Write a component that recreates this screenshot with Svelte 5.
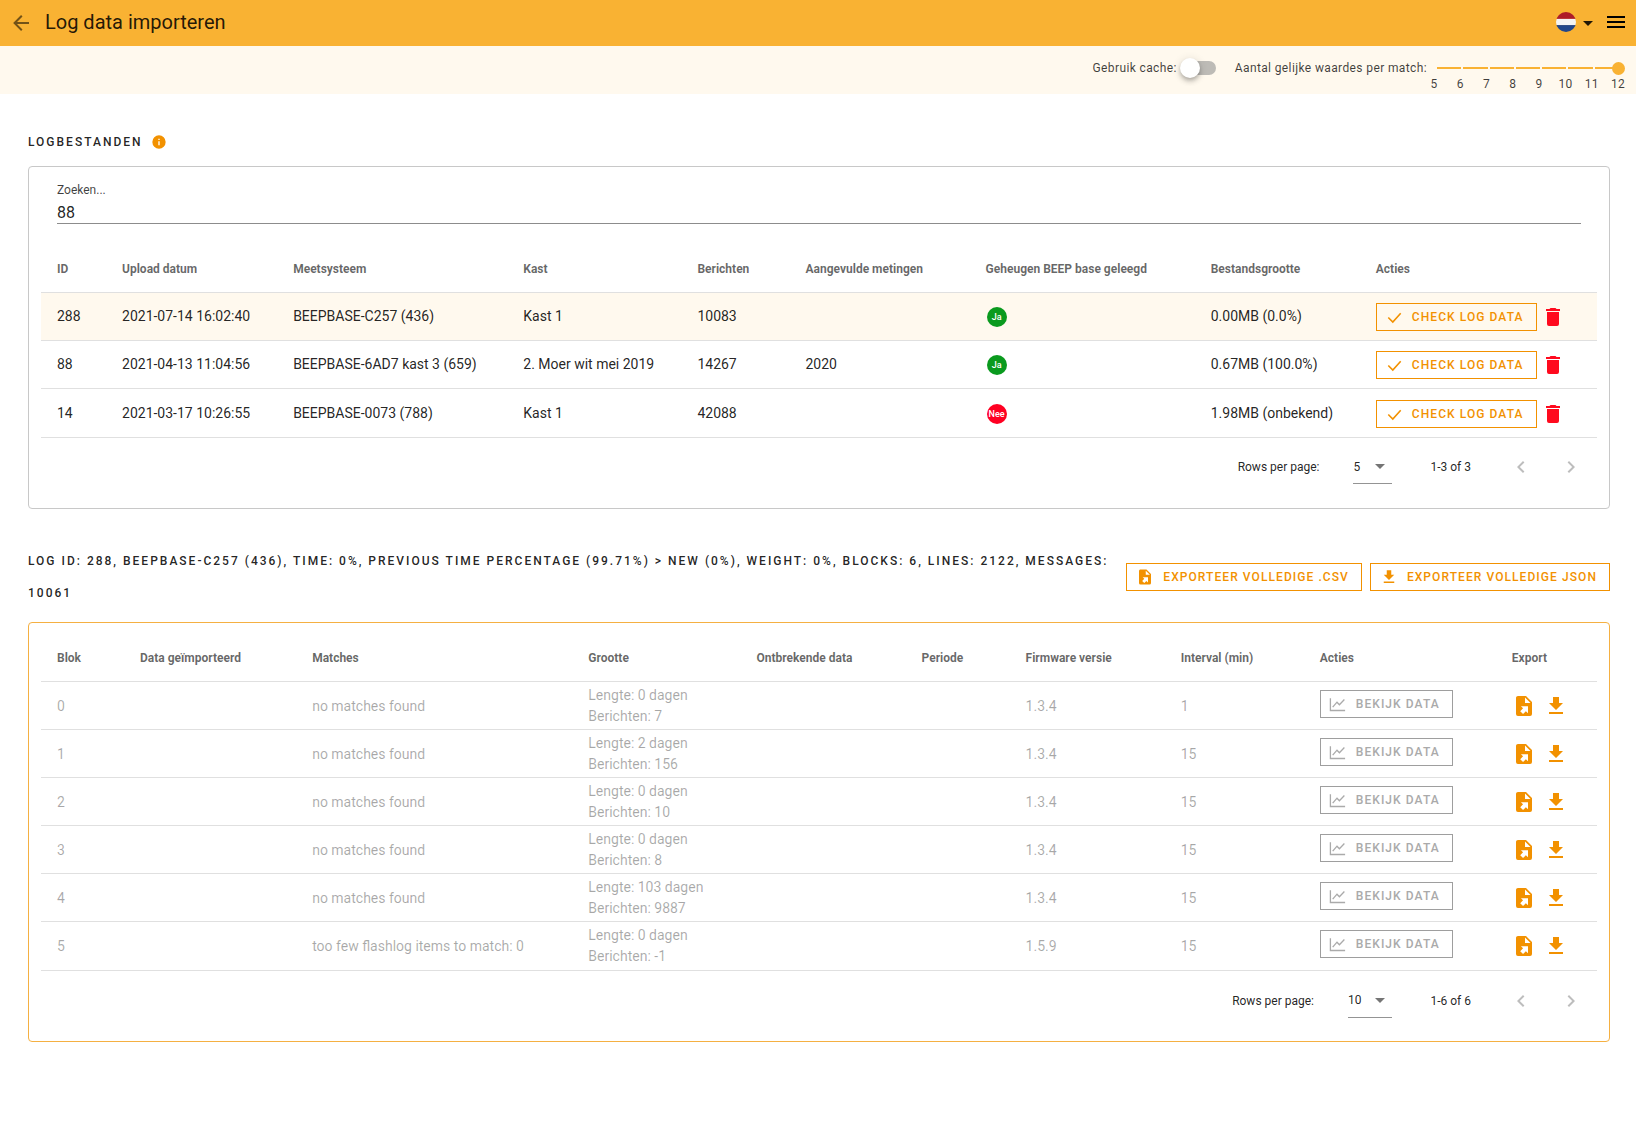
<script>
  const files = [
    { id: 288, date: '2021-07-14 16:02:40', sys: 'BEEPBASE-C257 (436)', kast: 'Kast 1', msg: 10083, fill: '', ok: true, size: '0.00MB (0.0%)' },
    { id: 88, date: '2021-04-13 11:04:56', sys: 'BEEPBASE-6AD7 kast 3 (659)', kast: '2. Moer wit mei 2019', msg: 14267, fill: '2020', ok: true, size: '0.67MB (100.0%)' },
    { id: 14, date: '2021-03-17 10:26:55', sys: 'BEEPBASE-0073 (788)', kast: 'Kast 1', msg: 42088, fill: '', ok: false, size: '1.98MB (onbekend)' }
  ];
  const fileHead = ['ID', 'Upload datum', 'Meetsysteem', 'Kast', 'Berichten', 'Aangevulde metingen', 'Geheugen BEEP base geleegd', 'Bestandsgrootte', 'Acties'];
  const fileCols = [65, 171, 230, 174, 108, 180, 225, 165, 237];
  const blocks = [
    { b: 0, m: 'no matches found', d: 0, n: 7, v: '1.3.4', i: 1 },
    { b: 1, m: 'no matches found', d: 2, n: 156, v: '1.3.4', i: 15 },
    { b: 2, m: 'no matches found', d: 0, n: 10, v: '1.3.4', i: 15 },
    { b: 3, m: 'no matches found', d: 0, n: 8, v: '1.3.4', i: 15 },
    { b: 4, m: 'no matches found', d: 103, n: 9887, v: '1.3.4', i: 15 },
    { b: 5, m: 'too few flashlog items to match: 0', d: 0, n: -1, v: '1.5.9', i: 15 }
  ];
  const blockHead = ['Blok', 'Data geïmporteerd', 'Matches', 'Grootte', 'Ontbrekende data', 'Periode', 'Firmware versie', 'Interval (min)', 'Acties', 'Export'];
  const blockCols = [83, 172, 276, 168, 165, 104, 155, 139, 192, 101];
  const marks = [5, 6, 7, 8, 9, 10, 11, 12];
  const fileExport = 'M6,2C4.89,2 4,2.9 4,4V20A2,2 0 0,0 6,22H18A2,2 0 0,0 20,20V8L14,2M13,3.5L18.5,9H13M8.93,12.22H16V19.29L13.88,17.17L11.05,20L8.22,17.17L11.05,14.35';
  const download = 'M5,20H19V18H5M19,9H15V3H9V9H5L12,16L19,9Z';
  const trash = 'M19,4H15.5L14.5,3H9.5L8.5,4H5V6H19M6,19A2,2 0 0,0 8,21H16A2,2 0 0,0 18,19V7H6V19Z';
  const chevL = 'M15.41,16.58L10.83,12L15.41,7.41L14,6L8,12L14,18L15.41,16.58Z';
  const chevR = 'M8.59,16.58L13.17,12L8.59,7.41L10,6L16,12L10,18L8.59,16.58Z';
</script>

{#snippet icon(d, cls)}
  <svg class={cls} viewBox="0 0 24 24" aria-hidden="true"><path {d} /></svg>
{/snippet}

{#snippet footer(rows, range)}
  <div class="foot">
    <span>Rows per page:</span>
    <div class="sel"><span>{rows}</span><i class="caret grey"></i></div>
    <span class="range">{range}</span>
    <div class="pg">{@render icon(chevL, 'chev')}</div>
    <div class="pg next">{@render icon(chevR, 'chev')}</div>
  </div>
{/snippet}

<header class="bar">
  <svg class="back" viewBox="0 0 24 24"><path d="M20,11V13H8L13.5,18.5L12.08,19.92L4.16,12L12.08,4.08L13.5,5.5L8,11H20Z" /></svg>
  <h1>Log data importeren</h1>
  <div class="spacer"></div>
  <svg class="flag" viewBox="0 0 22 22">
    <defs><clipPath id="fc"><circle cx="11" cy="11" r="11" /></clipPath></defs>
    <g clip-path="url(#fc)">
      <rect width="22" height="7.6" fill="#ae1c28" />
      <rect y="7.6" width="22" height="6.8" fill="#f4f4f4" />
      <rect y="14.4" width="22" height="7.6" fill="#21468b" />
    </g>
  </svg>
  <i class="caret dark"></i>
  <div class="burger"><span></span><span></span><span></span></div>
</header>

<div class="sub">
  <span class="lbl">Gebruik cache:</span>
  <div class="switch"><div class="thumb"></div></div>
  <span class="lbl second">Aantal gelijke waardes per match:</span>
  <div class="slider">
    <div class="track">
      {#each marks as _, i}
        {#if i > 0}<b class="seg"></b>{/if}
      {/each}
      <div class="knob"></div>
    </div>
    <div class="marks">{#each marks as m}<span>{m}</span>{/each}</div>
  </div>
</div>

<main>
  <div class="title first">
    <span class="overline">Logbestanden</span>
    {@render icon('M13,9H11V7H13M13,17H11V11H13M12,2A10,10 0 0,0 2,12A10,10 0 0,0 12,22A10,10 0 0,0 22,12A10,10 0 0,0 12,2Z', 'info')}
  </div>

  <section class="card">
    <div class="search">
      <label for="q">Zoeken...</label>
      <input id="q" value="88" />
    </div>
    <table>
      <colgroup>{#each fileCols as w}<col style="width:{w}px" />{/each}</colgroup>
      <thead><tr>{#each fileHead as h}<th>{h}</th>{/each}</tr></thead>
      <tbody>
        {#each files as f, i}
          <tr class:sel-row={i === 0}>
            <td>{f.id}</td>
            <td>{f.date}</td>
            <td>{f.sys}</td>
            <td>{f.kast}</td>
            <td>{f.msg}</td>
            <td>{f.fill}</td>
            <td><span class="chip" class:no={!f.ok}>{f.ok ? 'Ja' : 'Nee'}</span></td>
            <td>{f.size}</td>
            <td>
              <div class="acts">
                <button class="btn check">
                  <svg class="tick" viewBox="0 0 18 18"><path d="M3.3,9.5 L7.8,14 L15.7,5.3" /></svg>
                  Check log data
                </button>
                {@render icon(trash, 'trash')}
              </div>
            </td>
          </tr>
        {/each}
      </tbody>
    </table>
    {@render footer(5, '1-3 of 3')}
  </section>

  <div class="second-head">
    <div class="overline long">Log ID: 288, BEEPBASE-C257 (436), Time: 0%, previous time percentage (99.71%) &gt; new (0%), Weight: 0%, Blocks: 6, Lines: 2122, Messages: 10061</div>
    <div class="exports">
      <button class="btn exp">{@render icon(fileExport, 'ic18')}Exporteer volledige .csv</button>
      <button class="btn exp">{@render icon(download, 'ic18')}Exporteer volledige json</button>
    </div>
  </div>

  <section class="card orange">
    <table class="blocks">
      <colgroup>{#each blockCols as w}<col style="width:{w}px" />{/each}</colgroup>
      <thead><tr>{#each blockHead as h}<th>{h}</th>{/each}</tr></thead>
      <tbody>
        {#each blocks as r}
          <tr>
            <td>{r.b}</td>
            <td></td>
            <td>{r.m}</td>
            <td class="two">Lengte: {r.d} dagen<br />Berichten: {r.n}</td>
            <td></td>
            <td></td>
            <td>{r.v}</td>
            <td>{r.i}</td>
            <td>
              <button class="btn view">
                <svg class="chart" viewBox="0 0 18 18"><path d="M1.4,3.2 V15.5 H16.1 M3.7,12.2 L8,7.2 L10.4,9.8 L15.4,4.5" /></svg>
                Bekijk data
              </button>
            </td>
            <td>
              <div class="xp">
                {@render icon(fileExport, 'ic24')}
                {@render icon(download, 'ic24')}
              </div>
            </td>
          </tr>
        {/each}
      </tbody>
    </table>
    {@render footer(10, '1-6 of 6')}
  </section>
</main>

<style>
  :global(body) {
    margin: 0;
    font-family: Roboto, "Liberation Sans", sans-serif;
    color: rgba(0, 0, 0, 0.87);
    background: #fff;
  }
  .bar {
    height: 46px;
    background: #f9b233;
    display: flex;
    align-items: center;
    padding: 0 11px 0 9px;
  }
  .back { width: 24px; height: 24px; fill: rgba(0, 0, 0, 0.54); margin-bottom: 1px; }
  h1 {
    margin: 0 0 2px 12px;
    font-size: 20px;
    font-weight: 400;
    line-height: 44px;
  }
  .spacer { flex: 1; }
  .flag { width: 20px; height: 20px; margin-bottom: 2px; }
  .caret {
    display: block;
    width: 0;
    height: 0;
    border-left: 5px solid transparent;
    border-right: 5px solid transparent;
    border-top: 5px solid;
  }
  .caret.dark { color: rgba(0, 0, 0, 0.87); margin: 0 14px 0 7px; }
  .caret.grey { color: rgba(0, 0, 0, 0.54); }
  .burger { width: 18px; display: flex; flex-direction: column; gap: 3px; margin-bottom: 2px; }
  .burger span { display: block; height: 2px; background: #000; }

  .sub {
    height: 48px;
    background: #fff9ee;
    display: flex;
    align-items: flex-start;
    justify-content: flex-end;
    padding-right: 11px;
    font-size: 12px;
    letter-spacing: 0.38px;
    color: rgba(0, 0, 0, 0.75);
  }
  .lbl { line-height: 45px; }
  .second { margin-left: 19px; }
  .switch {
    position: relative;
    width: 35px;
    height: 14px;
    margin: 15px 0 0 4px;
    background: #bdbbb6;
    border-radius: 7px;
  }
  .thumb {
    position: absolute;
    left: -1px;
    top: -3px;
    width: 20px;
    height: 20px;
    border-radius: 50%;
    background: #fff;
    box-shadow: 0 2px 4px -1px rgba(0, 0, 0, 0.2), 0 4px 5px rgba(0, 0, 0, 0.14), 0 1px 10px rgba(0, 0, 0, 0.12);
  }
  .slider { width: 198px; padding-top: 21px; }
  .track {
    position: relative;
    height: 2px;
    margin: 0 6px 0 10px;
    display: flex;
    gap: 2px;
  }
  .seg { flex: 1; background: #f9b233; }
  .knob {
    position: absolute;
    right: -6px;
    top: -5px;
    width: 13px;
    height: 13px;
    border-radius: 50%;
    background: #f9b233;
  }
  .marks {
    display: flex;
    justify-content: space-between;
    margin-top: 8px;
    line-height: 14px;
  }
  .marks span { width: 14px; text-align: center; }

  main { padding: 32px 26px 0 28px; }
  .title { display: flex; align-items: center; height: 32px; margin-bottom: 8px; }
  .overline {
    font-size: 12px;
    font-weight: 500;
    letter-spacing: 0.1666em;
    text-transform: uppercase;
    line-height: 32px;
  }
  .info { width: 16px; height: 16px; fill: #f29100; margin-left: 8px; }

  .card {
    border: 1px solid #c8c8c8;
    border-radius: 4px;
    padding: 11px 12px 11px;
  }
  .card.orange { border-color: #f5b042; }
  .search { padding: 0 16px; height: 66px; box-sizing: border-box; }
  .search label {
    display: block;
    font-size: 12px;
    line-height: 14px;
    padding-top: 5px;
    color: rgba(0, 0, 0, 0.75);
  }
  .search input {
    display: block;
    width: 100%;
    box-sizing: border-box;
    border: 0;
    border-bottom: 1px solid #8c8c8c;
    outline: 0;
    padding: 2px 0 0;
    margin-top: 2px;
    height: 25px;
    font: 16px Roboto, sans-serif;
    color: rgba(0, 0, 0, 0.87);
    background: none;
  }

  table { border-collapse: collapse; table-layout: fixed; width: 100%; }
  th {
    height: 48px;
    box-sizing: border-box;
    padding: 2px 16px 0;
    font-size: 12px;
    font-weight: 700;
    text-align: left;
    color: rgba(0, 0, 0, 0.6);
    border-bottom: 1px solid #e0e0e0;
    white-space: nowrap;
  }
  td {
    height: 48px;
    padding: 0 16px;
    font-size: 14px;
    border-bottom: 1px solid #e0e0e0;
    white-space: nowrap;
    box-sizing: border-box;
  }
  tr:last-child td { height: 49px; }
  .sel-row td { background: #fff9ee; }
  .blocks td { color: rgba(0, 0, 0, 0.34); }
  .two { line-height: 21px; }

  .chip {
    display: inline-block;
    position: relative;
    top: 1px;
    width: 20px;
    height: 20px;
    margin-left: 1px;
    border-radius: 50%;
    background: #0a9a1e;
    color: #fff;
    font-size: 9px;
    font-weight: 500;
    line-height: 20px;
    text-align: center;
    vertical-align: middle;
  }
  .chip.no { background: #ff0022; }

  .btn {
    display: inline-flex;
    align-items: center;
    box-sizing: border-box;
    height: 28px;
    padding: 0 12px 0 8px;
    background: none;
    border: 1px solid #f29100;
    color: #f29100;
    font: 500 12px Roboto, sans-serif;
    letter-spacing: 0.0892857em;
    text-transform: uppercase;
    white-space: nowrap;
  }
  .acts { display: flex; align-items: center; margin-top: 2px; }
  .tick {
    flex: none;
    width: 18px;
    height: 18px;
    margin-right: 9px;
    fill: none;
    stroke: #f29100;
    stroke-width: 1.6;
  }
  .trash { width: 24px; height: 24px; fill: #ff0a1e; margin-left: 4px; }

  .second-head { display: flex; align-items: center; margin-top: 36px; margin-bottom: 13px; }
  .long { flex: 1; padding-right: 16px; }
  .exports { display: flex; gap: 8px; flex: none; }
  .exp { padding-left: 9px; }
  .ic18 { flex: none; width: 18px; height: 18px; fill: #f29100; margin-right: 9px; }
  .ic24 { width: 24px; height: 24px; fill: #f29100; }
  .view {
    width: 133px;
    border-color: #9e9e9e;
    color: #aaa;
    position: relative;
    top: -2px;
  }
  .chart {
    flex: none;
    width: 18px;
    height: 18px;
    margin-right: 9px;
    fill: none;
    stroke: #aaa;
    stroke-width: 1.3;
  }
  .xp { display: flex; gap: 8px; }

  .foot {
    height: 59px;
    display: flex;
    align-items: center;
    justify-content: flex-end;
    padding-right: 8px;
    font-size: 12px;
  }
  .sel {
    display: flex;
    align-items: center;
    justify-content: space-between;
    margin-left: 34px;
    padding-right: 7px;
    min-width: 32px;
    height: 33px;
    border-bottom: 1px solid #949494;
  }
  .sel span { margin-right: 14px; }
  .range { margin: 0 32px 0 38px; }
  .pg { width: 36px; height: 36px; display: flex; align-items: center; justify-content: center; }
  .pg.next { margin-left: 14px; }
  .chev { width: 24px; height: 24px; fill: rgba(0, 0, 0, 0.26); }
</style>
